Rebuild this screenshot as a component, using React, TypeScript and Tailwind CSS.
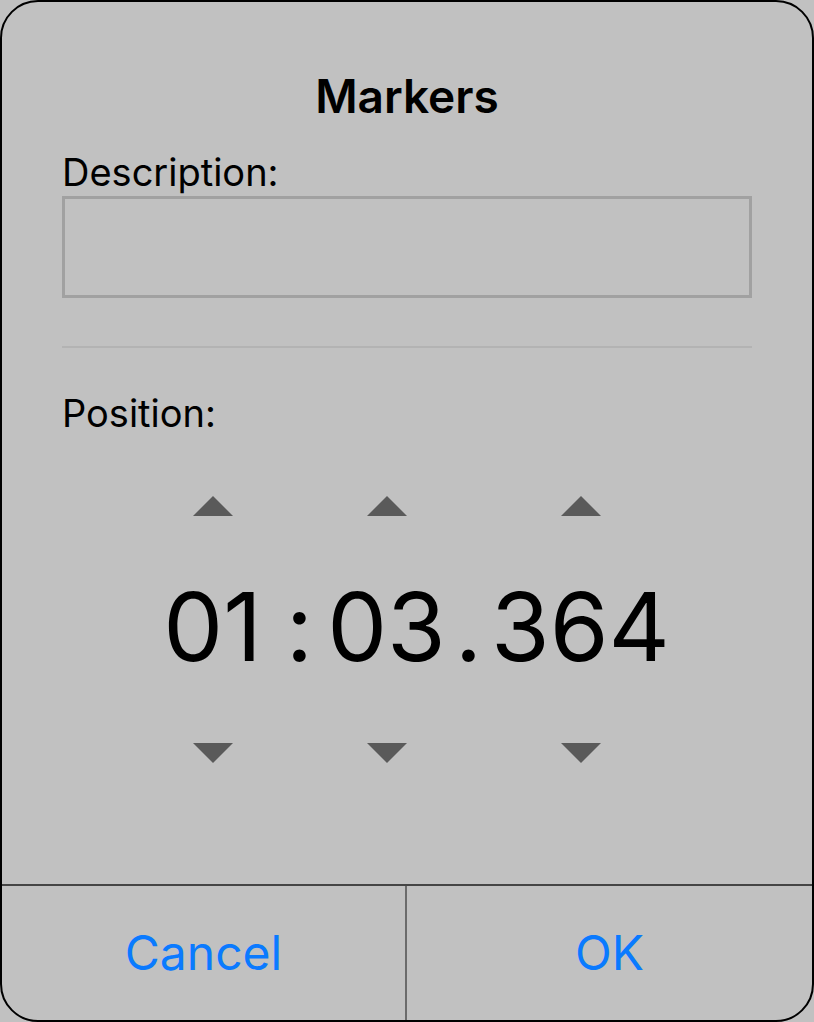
import React from "react";

function Up() {
  return (
    <svg width="40" height="20" viewBox="0 0 40 20" className="block">
      <polygon points="0,20 20,0 40,20" fill="#5a5a5a" />
    </svg>
  );
}
function Down() {
  return (
    <svg width="40" height="20" viewBox="0 0 40 20" className="block">
      <polygon points="0,0 40,0 20,20" fill="#5a5a5a" />
    </svg>
  );
}

function Col({ value, width }: { value: string; width: string }) {
  return (
    <div className={`flex flex-col items-center ${width}`}>
      <Up />
      <div className="mt-[54px] h-[112px] flex items-center leading-none text-[95px] text-black">
        {value}
      </div>
      <div className="mt-[61px]">
        <Down />
      </div>
    </div>
  );
}

export default function App() {
  return (
    <div
      className="w-[814px] h-[1022px] bg-[#c1c1c1]"
      style={{ fontFamily: "Inter, 'Noto Sans', sans-serif" }}
    >
      <div className="w-[814px] h-[1022px] border-2 border-black rounded-[38px] flex flex-col overflow-hidden">
        <div className="flex-1 px-[60px]">
          <div className="pt-[66px] text-center text-[46px] font-semibold leading-[56px] text-black">
            Markers
          </div>
          <div className="mt-[25px] text-[38px] leading-[46px] text-black">Description:</div>
          <div className="mt-[1px] h-[102px] border-[3px] border-[#a1a1a1]"></div>
          <div className="mt-[48px] h-[2px] bg-[#b3b3b3]"></div>
          <div className="mt-[42px] text-[38px] leading-[46px] text-black">Position:</div>
          <div className="mt-[60px] flex justify-center">
            <div className="flex ml-[9px]">
              <Col value="01" width="w-[120px]" />
              <div className="w-[54px] flex flex-col items-center">
                <div className="mt-[74px] h-[112px] flex items-center text-[95px] leading-none">:</div>
              </div>
              <Col value="03" width="w-[120px]" />
              <div className="w-[44px] flex flex-col items-center">
                <div className="mt-[74px] h-[112px] flex items-center text-[95px] leading-none">.</div>
              </div>
              <Col value="364" width="w-[180px]" />
            </div>
          </div>
        </div>
        <div className="h-[136px] border-t-2 border-[#454545] flex">
          <div className="w-[405px] border-r-2 border-[#6b6b6b] flex items-center justify-center text-[48px] text-[#0a7aff]">
            Cancel
          </div>
          <div className="flex-1 flex items-center justify-center text-[48px] text-[#0a7aff]">
            OK
          </div>
        </div>
      </div>
    </div>
  );
}
